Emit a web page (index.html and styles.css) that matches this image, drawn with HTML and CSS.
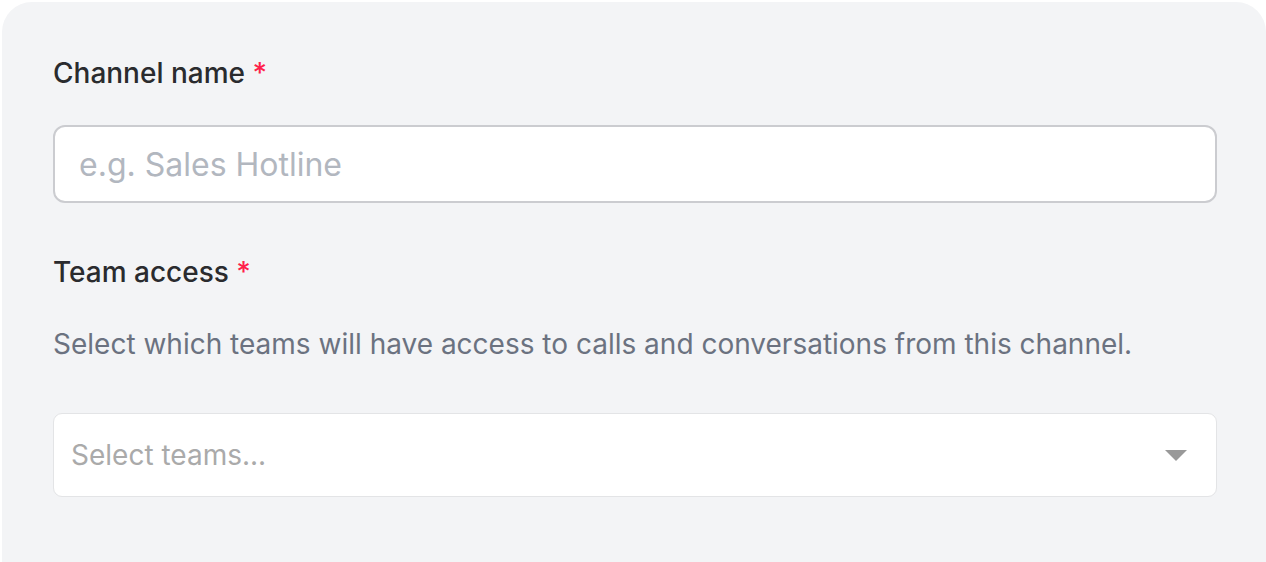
FILE: index.html
```html
<!DOCTYPE html>
<html>
<head>
<meta charset="utf-8">
<link rel="stylesheet" href="styles.css">
</head>
<body>
<div class="panel">
  <div class="field">
    <label class="label">Channel name <span class="req">*</span></label>
    <div class="input"><span class="placeholder">e.g. Sales Hotline</span></div>
  </div>
  <div class="field field-team">
    <label class="label">Team access <span class="req">*</span></label>
    <p class="desc">Select which teams will have access to calls and conversations from this channel.</p>
    <div class="select">
      <span class="select-ph">Select teams...</span>
      <svg class="caret" width="22" height="11" viewBox="0 0 22 11"><path d="M0 0 H22 L11 11 Z" fill="#999"/></svg>
    </div>
  </div>
</div>
</body>
</html>
```

FILE: styles.css
```css
html, body {
  margin: 0;
  padding: 0;
  background: #ffffff;
  font-family: Inter, "Noto Sans", sans-serif;
  overflow: hidden;
}
.panel {
  margin: 2px 0 0 2px;
  height: 560px;
  background: #f3f4f6;
  border-radius: 30px 30px 0 0;
  padding: 0 49px 0 51px;
  box-sizing: border-box;
}
.field {
  display: flex;
  flex-direction: column;
}
.label {
  display: block;
  padding-top: 54px;
  font-size: 28px;
  line-height: 34px;
  color: #2a2b2e;
  font-weight: 450;
}
.req {
  color: #ff1f4b;
}
.input {
  margin-top: 35px;
  height: 78px;
  box-sizing: border-box;
  border: 2px solid #cbccd0;
  border-radius: 12px;
  background: #fff;
  display: flex;
  align-items: center;
  padding-left: 24px;
}
.placeholder {
  font-size: 32px;
  color: #b2b7bf;
}
.field-team .label {
  padding-top: 52px;
}
.desc {
  margin: 38px 0 0;
  font-size: 28px;
  line-height: 34px;
  color: #6b7280;
}
.select {
  margin-top: 52px;
  height: 84px;
  box-sizing: border-box;
  border: 1.5px solid #e3e4e6;
  border-radius: 9px;
  background: #fff;
  display: flex;
  align-items: center;
  justify-content: space-between;
  padding: 0 29px 0 17px;
}
.select-ph {
  font-size: 28px;
  color: #aaaaaa;
}
.caret {
  display: block;
}
```
